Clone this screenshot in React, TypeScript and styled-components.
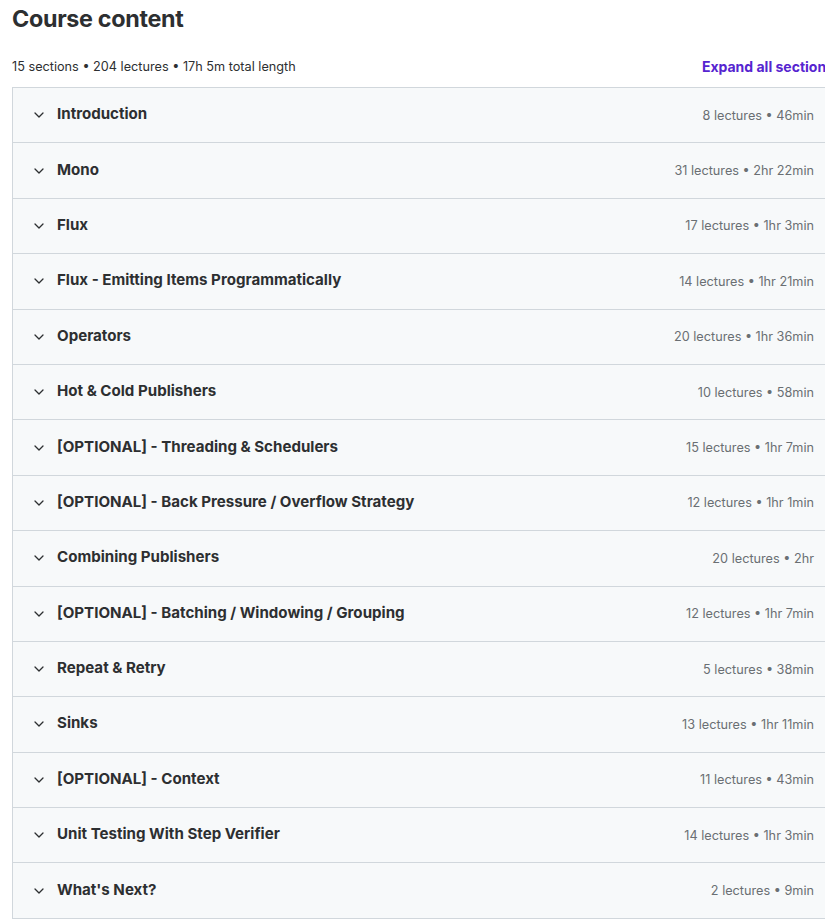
import React from "react";
import styled, { createGlobalStyle } from "styled-components";

// Данные секций курса
const sections = [
  { title: "Introduction", meta: "8 lectures • 46min" },
  { title: "Mono", meta: "31 lectures • 2hr 22min" },
  { title: "Flux", meta: "17 lectures • 1hr 3min" },
  { title: "Flux - Emitting Items Programmatically", meta: "14 lectures • 1hr 21min" },
  { title: "Operators", meta: "20 lectures • 1hr 36min" },
  { title: "Hot & Cold Publishers", meta: "10 lectures • 58min" },
  { title: "[OPTIONAL] - Threading & Schedulers", meta: "15 lectures • 1hr 7min" },
  { title: "[OPTIONAL] - Back Pressure / Overflow Strategy", meta: "12 lectures • 1hr 1min" },
  { title: "Combining Publishers", meta: "20 lectures • 2hr" },
  { title: "[OPTIONAL] - Batching / Windowing / Grouping", meta: "12 lectures • 1hr 7min" },
  { title: "Repeat & Retry", meta: "5 lectures • 38min" },
  { title: "Sinks", meta: "13 lectures • 1hr 11min" },
  { title: "[OPTIONAL] - Context", meta: "11 lectures • 43min" },
  { title: "Unit Testing With Step Verifier", meta: "14 lectures • 1hr 3min" },
  { title: "What's Next?", meta: "2 lectures • 9min" },
];

const GlobalStyle = createGlobalStyle`
  html, body {
    margin: 0;
    padding: 0;
    background: #ffffff;
    overflow: hidden;
  }
  body {
    font-family: Inter, "Noto Sans", sans-serif;
    color: #2d2f31;
  }
`;

// Иконка шеврона
const Chevron = () => (
  <svg width="10" height="6" viewBox="0 0 10 6" fill="none">
    <path d="M1 1l4 4 4-4" stroke="#2d2f31" strokeWidth="1.3" strokeLinecap="round" strokeLinejoin="round" />
  </svg>
);

function App() {
  return (
    <>
      <GlobalStyle />
      <Wrapper>
        <Title>Course content</Title>
        <SummaryBar>
          <span>15 sections • 204 lectures • 17h 5m total length</span>
          <ExpandLink>Expand all sections</ExpandLink>
        </SummaryBar>
        <SectionList>
          {sections.map((s) => (
            <SectionRow key={s.title}>
              <Chevron />
              <SectionTitle>{s.title}</SectionTitle>
              <SectionMeta>{s.meta}</SectionMeta>
            </SectionRow>
          ))}
        </SectionList>
      </Wrapper>
    </>
  );
}

const Wrapper = styled.div`
  width: 822px;
  margin-left: 12px;
`;

const Title = styled.h2`
  margin: 0;
  padding-top: 4px;
  height: 30px;
  font-size: 23.3px;
  font-weight: 700;
  letter-spacing: -0.3px;
  color: #2d2f31;
`;

const SummaryBar = styled.div`
  display: flex;
  align-items: flex-end;
  justify-content: space-between;
  height: 53px;
  padding-bottom: 12px;
  box-sizing: border-box;
  font-size: 12.7px;
  line-height: 16px;
  color: #2d2f31;
`;

const ExpandLink = styled.button`
  border: none;
  background: none;
  padding: 0;
  font-family: inherit;
  font-size: 14px;
  line-height: 16px;
  font-weight: 700;
  color: #5624d0;
  cursor: pointer;
  white-space: nowrap;
`;

const SectionList = styled.div`
  border: 1px solid #d1d7dc;
  border-bottom: none;
`;

const SectionRow = styled.div`
  display: flex;
  align-items: center;
  height: 55.4px;
  padding: 0 19px 0 21px;
  background: #f7f9fa;
  border-bottom: 1px solid #d1d7dc;
  box-sizing: border-box;
  gap: 13px;
`;

const SectionTitle = styled.div`
  flex: 1;
  padding-bottom: 3px;
  font-size: 15.1px;
  font-weight: 700;
  color: #2d2f31;
`;

const SectionMeta = styled.div`
  font-size: 12.7px;
  color: #6a6f73;
`;

export default App;
